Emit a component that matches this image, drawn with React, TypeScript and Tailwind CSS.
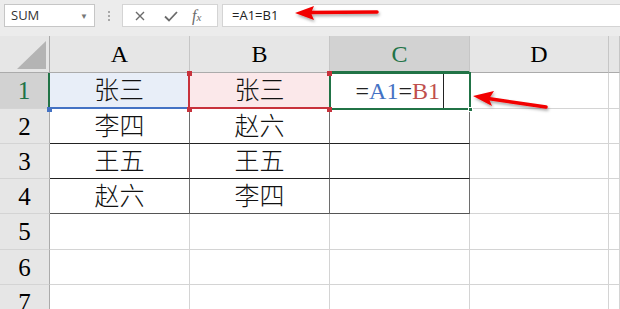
import React from 'react';

const serif = { fontFamily: '"Liberation Serif", "Noto Sans CJK SC", serif' };

function HeaderCell({ children, className = '' }: { children?: React.ReactNode; className?: string }) {
  return (
    <div className={`flex items-center justify-center border-r border-b border-r-[#c6c6c6] text-[24px] leading-none ${className}`}>
      {children}
    </div>
  );
}

function RowHead({ n, className = '' }: { n: number; className?: string }) {
  return (
    <div className={`flex items-center justify-center border-r border-b border-b-[#d4d4d4] text-[25px] leading-none ${className}`}>
      {n}
    </div>
  );
}

function Cell({ children, className = 'bg-white border-[#d4d4d4]' }: { children?: React.ReactNode; className?: string }) {
  return (
    <div className={`flex items-center justify-center border-r border-b text-[25px] font-light leading-none text-[#111] ${className}`}>
      {children}
    </div>
  );
}

function Square({ className }: { className: string }) {
  return <div className={`absolute w-[5px] h-[5px] ${className}`} />;
}

export default function App() {
  const data = [
    ['李四', '赵六'],
    ['王五', '王五'],
    ['赵六', '李四'],
  ];

  return (
    <div className="relative w-[620px] h-[309px] overflow-hidden bg-[#e6e6e6]" style={serif}>
      {/* formula bar */}
      <div className="flex items-start h-[36px] pt-[4px] pl-[4px] bg-[#ececec]" style={{ fontFamily: '"Open Sans", "Noto Sans", sans-serif' }}>
        <div className="flex items-center justify-between w-[91px] h-[23px] bg-white border border-[#c6c6c6] pl-[6px] pr-[6px] text-[13px] text-[#333]">
          <span>SUM</span>
          <span className="text-[8px] text-[#777]">▼</span>
        </div>
        <div className="flex flex-col items-center justify-center gap-[2px] w-[27px] h-[23px]">
          <span className="w-[2px] h-[2px] bg-[#a8a8a8]" />
          <span className="w-[2px] h-[2px] bg-[#a8a8a8]" />
          <span className="w-[2px] h-[2px] bg-[#a8a8a8]" />
        </div>
        <div className="flex items-center w-[96px] h-[23px] bg-white border border-[#d4d4d4] text-[#6b6b6b]">
          <svg width="14" height="14" viewBox="0 0 14 14" className="ml-[10px]">
            <path d="M3 3 L11 11 M11 3 L3 11" stroke="#6b6b6b" strokeWidth="1.4" />
          </svg>
          <svg width="16" height="14" viewBox="0 0 16 14" className="ml-[16px]">
            <path d="M2 7.5 L6 11.5 L14 3" stroke="#6b6b6b" strokeWidth="1.8" fill="none" />
          </svg>
          <span className="ml-[13px] text-[16px] italic leading-none" style={{ fontFamily: '"Liberation Serif", serif' }}>
            f<span className="text-[11px]">x</span>
          </span>
        </div>
        <div className="flex items-center flex-1 ml-[4px] h-[23px] bg-white border border-r-0 border-[#d4d4d4] pl-[9px] text-[13px] text-[#222]">
          =A1=B1
        </div>
      </div>

      {/* sheet */}
      <div className="grid grid-cols-[50px_140px_140px_140px_139px_1fr] grid-rows-[37px_36px_35px_35px_35px_36px_35px_35px]">
        {/* corner */}
        <div className="relative border-r border-b border-r-[#ababab] border-b-[#ababab]">
          <svg width="50" height="37" className="absolute inset-0">
            <polygon points="46,5 46,33 17,33" fill="#b4b4b4" />
          </svg>
        </div>
        <HeaderCell className="border-b-[#ababab]">A</HeaderCell>
        <HeaderCell className="border-b-[#ababab]">B</HeaderCell>
        <HeaderCell className="bg-[#d2d2d2] text-[#217346] border-b-2 border-b-[#217346]">C</HeaderCell>
        <HeaderCell className="border-b-[#ababab]">D</HeaderCell>
        <HeaderCell className="border-b-[#ababab]" />

        {/* row 1 */}
        <RowHead n={1} className="bg-[#d2d2d2] text-[#217346] border-r-2 border-r-[#217346]" />
        <Cell className="bg-[#e8eef8] border-b-2 border-b-[#4472c4] border-r-2 border-r-[#c8323c]">张三</Cell>
        <Cell className="bg-[#fbe8ea] border-b-2 border-b-[#c8323c] border-r-[#d4d4d4]">张三</Cell>
        <div className="relative flex items-center justify-end bg-white outline-2 outline-[#217346] -outline-offset-1 pr-[26px] text-[24px] leading-none">
          <span className="text-[#222]">=</span>
          <span className="text-[#4472c4]">A1</span>
          <span className="text-[#222]">=</span>
          <span className="text-[#c0504d]">B1</span>
          <span className="ml-[3px] w-px h-[36px] bg-[#222]" />
          <div className="absolute right-[-3px] bottom-[-3px] w-[5px] h-[5px] bg-[#217346] border border-white" />
        </div>
        <Cell />
        <Cell />

        {/* rows 2-4 */}
        {data.map((r, i) => {
          const b = `bg-white border-r-[#6e6e6e] ${i === 2 ? 'border-b-[#555]' : 'border-b-[#222]'}`;
          return (
            <React.Fragment key={i}>
              <RowHead n={i + 2} className="bg-[#e6e6e6] border-r-[#ababab]" />
              <Cell className={b}>{r[0]}</Cell>
              <Cell className={b}>{r[1]}</Cell>
              <Cell className={b} />
              <Cell />
              <Cell />
            </React.Fragment>
          );
        })}

        {/* rows 5-7 */}
        {[5, 6, 7].map(n => (
          <React.Fragment key={n}>
            <RowHead n={n} className="bg-[#e6e6e6] border-r-[#ababab]" />
            <Cell />
            <Cell />
            <Cell />
            <Cell />
            <Cell />
          </React.Fragment>
        ))}
      </div>

      {/* range markers */}
      <Square className="left-[47px] top-[107px] bg-[#4472c4]" />
      <Square className="left-[187px] top-[71px] bg-[#c8323c]" />
      <Square className="left-[187px] top-[107px] bg-[#c8323c]" />
      <Square className="left-[327px] top-[71px] bg-[#c8323c]" />
      <Square className="left-[327px] top-[107px] bg-[#c8323c]" />

      {/* annotation arrows */}
      <svg width="620" height="309" className="absolute inset-0 pointer-events-none">
        <defs>
          <filter id="sh" x="-20%" y="-50%" width="140%" height="200%">
            <feDropShadow dx="1" dy="2" stdDeviation="1.5" floodColor="#000" floodOpacity="0.35" />
          </filter>
        </defs>
        <g filter="url(#sh)">
          <line x1="308" y1="12.5" x2="377" y2="12" stroke="#f20000" strokeWidth="3.5" strokeLinecap="round" />
          <polygon points="295,13 314,6 311,13 314,20" fill="#f20000" />
        </g>
        <g filter="url(#sh)">
          <line x1="488" y1="98.5" x2="546" y2="107" stroke="#f20000" strokeWidth="3.5" strokeLinecap="round" />
          <polygon points="473,96 494,91 489,99 492,106" fill="#f20000" />
        </g>
      </svg>
    </div>
  );
}
